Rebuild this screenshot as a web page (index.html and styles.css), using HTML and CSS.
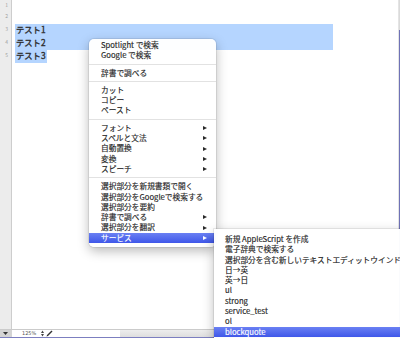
FILE: index.html
```html
<!DOCTYPE html>
<html lang="ja">
<head>
    <meta charset="UTF-8">
    <meta name="viewport" content="width=device-width, initial-scale=1.0">
    <title>テキストエディット</title>
    <link rel="stylesheet" href="styles.css">
</head>
<body>
    <div class="window">
        <div class="main">
            <!-- Editor -->
            <div class="editor">
                <div class="gutter">
                    <div class="num first">1</div>
                    <div class="num">2</div>
                    <div class="num">3</div>
                    <div class="num">4</div>
                    <div class="num">5</div>
                </div>
                <div class="page">
                    <div class="line first"></div>
                    <div class="line"></div>
                    <div class="line sel">テスト1</div>
                    <div class="line sel">テスト2</div>
                    <div class="line"><span class="sel">テスト3</span></div>
                </div>
            </div>

            <!-- Status bar -->
            <div class="status">
                <div class="status-menu">
                    <svg width="5" height="3" viewBox="0 0 5 3"><path d="M0 0H5L2.5 3Z" fill="#333"/></svg>
                </div>
                <div class="zoom">
                    <span class="zoom-value">125%</span>
                    <svg class="stepper" width="3" height="7" viewBox="0 0 3 7"><path d="M0 3L1.5 0.5L3 3ZM0 4L1.5 6.5L3 4Z" fill="#444"/></svg>
                    <svg class="pencil" width="7" height="7" viewBox="0 0 7 7"><path d="M0.5 6.5L1 5L5.5 0.5L6.5 1.5L2 6Z" fill="#333"/></svg>
                </div>
                <div class="status-rest"></div>
            </div>
        </div>
        <div class="edge"></div>
    </div>
    <div class="bottom-line"></div>

    <!-- Context menu -->
    <ul class="menu context">
        <li>Spotlight で検索</li>
        <li>Google で検索</li>
        <li class="sep"></li>
        <li>辞書で調べる</li>
        <li class="sep"></li>
        <li>カット</li>
        <li>コピー</li>
        <li>ペースト</li>
        <li class="sep"></li>
        <li>フォント<span class="arrow"></span></li>
        <li>スペルと文法<span class="arrow"></span></li>
        <li>自動置換<span class="arrow"></span></li>
        <li>変換<span class="arrow"></span></li>
        <li>スピーチ<span class="arrow"></span></li>
        <li class="sep"></li>
        <li>選択部分を新規書類で開く</li>
        <li>選択部分をGoogleで検索する</li>
        <li>選択部分を要約</li>
        <li>辞書で調べる<span class="arrow"></span></li>
        <li>選択部分を翻訳<span class="arrow"></span></li>
        <li class="active">サービス<span class="arrow"></span></li>
    </ul>

    <!-- Services submenu -->
    <ul class="menu submenu">
        <li>新規 AppleScript を作成</li>
        <li>電子辞典で検索する</li>
        <li>選択部分を含む新しいテキストエディットウインドウ</li>
        <li>日→英</li>
        <li>英→日</li>
        <li>ul</li>
        <li>strong</li>
        <li>service_test</li>
        <li>ol</li>
        <li class="active">blockquote</li>
    </ul>
</body>
</html>
```

FILE: styles.css
```css
/* General */
* {
    box-sizing: border-box;
}

body {
    margin: 0;
    width: 400px;
    height: 338px;
    overflow: hidden;
    position: relative;
    background-color: #ffffff;
    font-family: "Noto Sans CJK JP", sans-serif;
}

.window {
    display: flex;
    height: 337px;
}

.main {
    flex: 1;
    display: flex;
    flex-direction: column;
}

/* Editor */
.editor {
    flex: 1;
    display: flex;
}

.gutter {
    width: 12px;
    background-color: #ececec;
    border-right: 1px solid #cdcdcd;
    color: #a0a0a0;
    font-size: 5px;
    text-align: right;
    padding-right: 3px;
}

.num {
    height: 13px;
    line-height: 10px;
}

.num.first {
    height: 11px;
}

.page {
    flex: 1;
    padding-left: 3px;
}

.line {
    width: 318px;
    height: 13px;
    line-height: 11px;
    padding-left: 1px;
    font-size: 8.3px;
    color: #2e2e2e;
    -webkit-text-stroke: 0.35px #2e2e2e;
}

.line.first {
    height: 11px;
}

.sel {
    background-color: #b5d5ff;
}

span.sel {
    display: inline-block;
    height: 13px;
    margin-left: -1px;
    padding: 0 1px;
}

/* Status bar */
.status {
    height: 8px;
    display: flex;
    border-top: 1px solid #cbcbcb;
}

.status-menu {
    width: 12px;
    background-color: #d4d4d4;
    display: flex;
    align-items: center;
    padding-left: 3px;
}

.status-menu svg {
    display: block;
}

.zoom {
    width: 108px;
    background-color: #ffffff;
    display: flex;
    align-items: center;
    padding-left: 10px;
}

.zoom-value {
    font-family: "DejaVu Sans", sans-serif;
    font-size: 5px;
    color: #555555;
    line-height: 7px;
}

.stepper {
    margin-left: 5px;
}

.pencil {
    margin-left: 2px;
}

.status-rest {
    flex: 1;
    background: linear-gradient(#ededed, #dedede);
}

.edge {
    width: 2px;
    border-left: 1px solid #e4e4e4;
    background: linear-gradient(#dadada 0, #dadada 30px, #6f72b6 30px);
}

.bottom-line {
    height: 1px;
    background-color: #7c7fc0;
}

/* Menus */
.menu {
    position: absolute;
    list-style: none;
    margin: 0;
    background-color: rgba(255, 255, 255, 0.97);
    box-shadow: 0 0 0 1px rgba(0, 0, 0, 0.07), 0 4px 12px rgba(0, 0, 0, 0.28);
    font-size: 7.7px;
    color: #1e1e1e;
    -webkit-text-stroke: 0.15px #1e1e1e;
    white-space: nowrap;
}

.menu li {
    height: 10.3px;
    line-height: 10.3px;
    display: flex;
    align-items: center;
    justify-content: space-between;
}

.menu li.sep {
    height: 7px;
    position: relative;
}

.menu li.sep::after {
    content: "";
    position: absolute;
    left: 0;
    right: 0;
    top: 3px;
    height: 1px;
    background-color: #e2e2e2;
}

.arrow {
    width: 0;
    height: 0;
    border-left: 4px solid #2a2a2a;
    border-top: 2.5px solid transparent;
    border-bottom: 2.5px solid transparent;
}

.menu li.active {
    background: linear-gradient(#6a80f3, #3f57e9);
    color: #ffffff;
    -webkit-text-stroke-color: #ffffff;
}

.menu li.active .arrow {
    border-left-color: #ffffff;
}

.context {
    left: 89px;
    top: 39px;
    width: 127px;
    padding: 1px 0 4px 0;
    border-radius: 5px;
}

.context li {
    padding: 0 9px 0 12px;
}

.submenu {
    left: 214px;
    top: 229px;
    width: 200px;
    padding: 5px 0 5px 0;
    border-radius: 0 5px 5px 5px;
    overflow: hidden;
}

.submenu li {
    padding: 0 0 0 11px;
}
```
